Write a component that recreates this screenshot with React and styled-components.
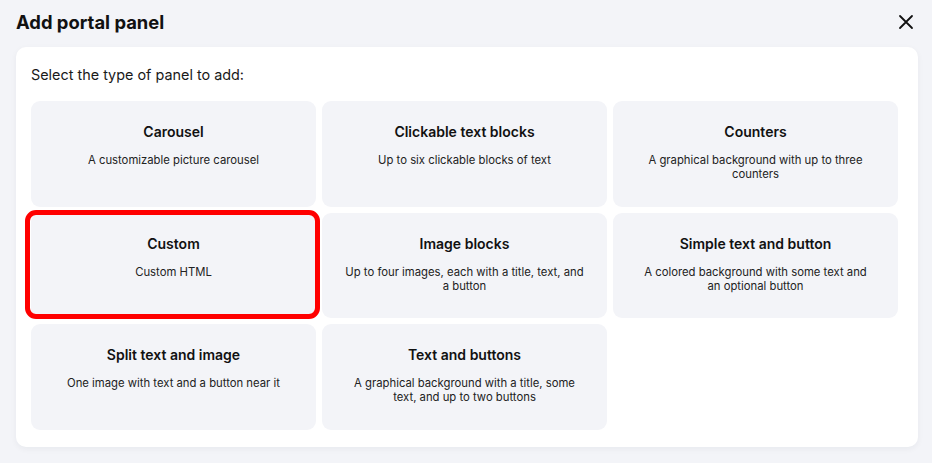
import React from 'react';
import styled, { createGlobalStyle } from 'styled-components';

const GlobalStyle = createGlobalStyle`
  html, body {
    margin: 0;
    padding: 0;
    background: #f3f4f8;
    font-family: Inter, "Noto Sans", sans-serif;
    color: #111;
  }
`;

const Page = styled.div`
  width: 932px;
  height: 463px;
  padding: 0 14px 0 16px;
  box-sizing: border-box;
  display: flex;
  flex-direction: column;
`;

const Header = styled.div`
  height: 47px;
  display: flex;
  align-items: center;
  justify-content: space-between;
  padding-bottom: 3px;
  box-sizing: border-box;
`;

const Title = styled.h1`
  margin: 0;
  font-size: 18.4px;
  font-weight: 700;
`;

const CloseButton = styled.button`
  border: 0;
  background: none;
  padding: 0;
  margin-right: 2px;
  width: 20px;
  height: 20px;
  display: flex;
  align-items: center;
  justify-content: center;
  cursor: pointer;
`;

const Sheet = styled.div`
  background: #fff;
  border-radius: 10px;
  box-shadow: 0 2px 6px rgba(20, 30, 60, 0.05);
  padding: 18px 20px 18px 15px;
  height: 400px;
  box-sizing: border-box;
`;

const Prompt = styled.p`
  margin: 0 0 17px;
  font-size: 14.4px;
  line-height: 19px;
  color: #1a1a1a;
`;

const Grid = styled.div`
  display: grid;
  grid-template-columns: repeat(3, 285px);
  grid-auto-rows: 105.5px;
  gap: 6px;
`;

const Card = styled.div`
  position: relative;
  background: #f3f4f8;
  border-radius: 9px;
  padding: 22px 20px 0;
  box-sizing: border-box;
  text-align: center;
  cursor: pointer;
`;

const Highlight = styled.span`
  position: absolute;
  left: -6px;
  right: -4px;
  top: -3px;
  bottom: -1px;
  border: 5px solid #ff0000;
  border-radius: 11px;
  pointer-events: none;
`;

const CardTitle = styled.h3`
  margin: 0 0 12px;
  font-size: 14px;
  line-height: 18px;
  font-weight: 600;
  color: #111;
`;

const CardText = styled.p`
  margin: 0 auto;
  max-width: ${({ $measure }) => $measure || '100%'};
  font-size: 11.3px;
  line-height: 14px;
  color: #222;
`;

const panels = [
  { title: 'Carousel', text: 'A customizable picture carousel' },
  { title: 'Clickable text blocks', text: 'Up to six clickable blocks of text' },
  { title: 'Counters', text: 'A graphical background with up to three counters' },
  { title: 'Custom', text: 'Custom HTML', selected: true },
  { title: 'Image blocks', text: 'Up to four images, each with a title, text, and a button' },
  { title: 'Simple text and button', text: 'A colored background with some text and an optional button', measure: '235px' },
  { title: 'Split text and image', text: 'One image with text and a button near it' },
  { title: 'Text and buttons', text: 'A graphical background with a title, some text, and up to two buttons' },
];

const App = () => (
  <>
    <GlobalStyle />
    <Page>
      <Header>
        <Title>Add portal panel</Title>
        <CloseButton aria-label="Close">
          <svg width="16" height="16" viewBox="0 0 16 16">
            <path d="M2 2L14 14M14 2L2 14" stroke="#111" strokeWidth="1.8" strokeLinecap="round" />
          </svg>
        </CloseButton>
      </Header>
      <Sheet>
        <Prompt>Select the type of panel to add:</Prompt>
        <Grid>
          {panels.map((p) => (
            <Card key={p.title}>
              {p.selected && <Highlight />}
              <CardTitle>{p.title}</CardTitle>
              <CardText $measure={p.measure}>{p.text}</CardText>
            </Card>
          ))}
        </Grid>
      </Sheet>
    </Page>
  </>
);

export default App;
